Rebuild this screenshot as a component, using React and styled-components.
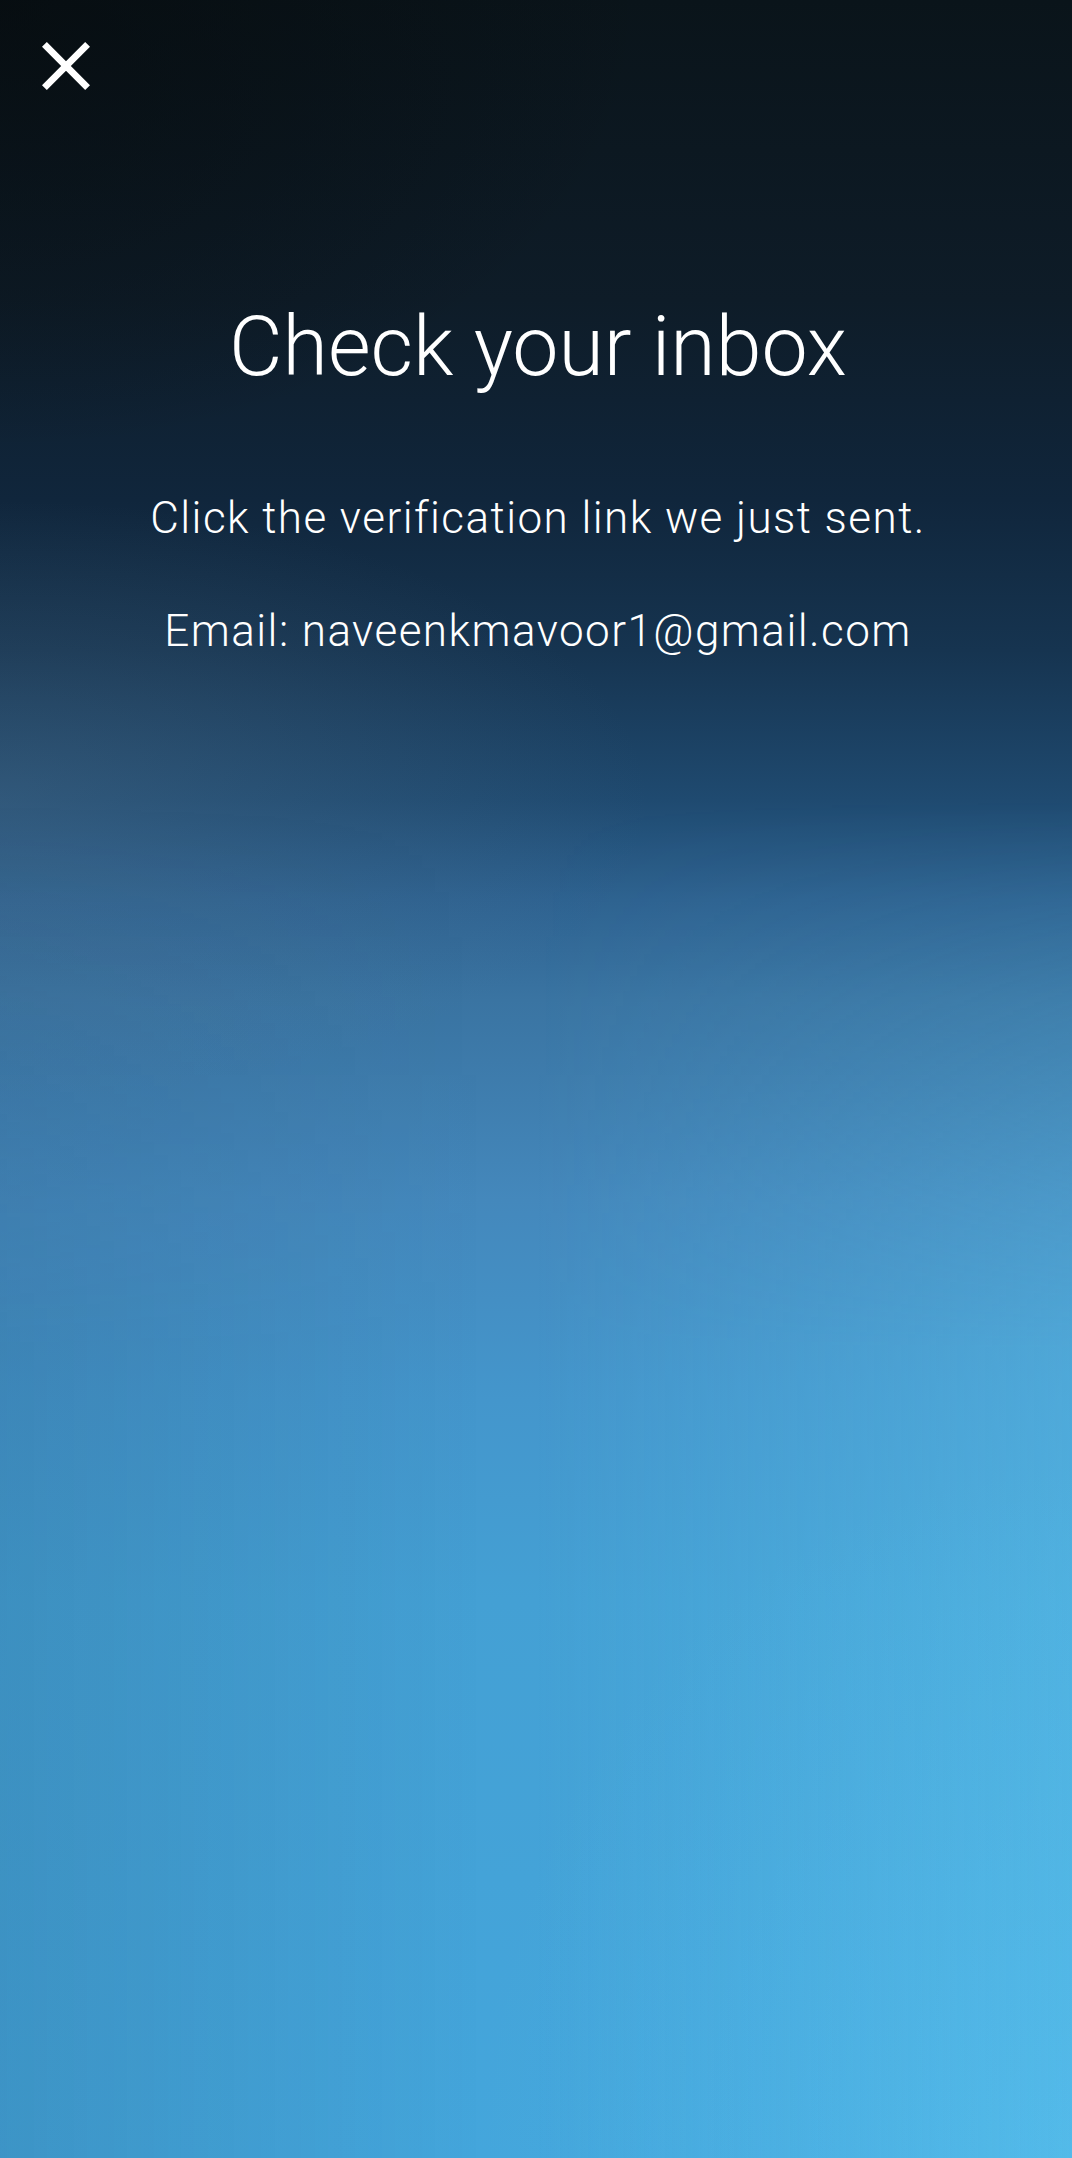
import React from "react";
import styled, { createGlobalStyle } from "styled-components";

const Global = createGlobalStyle`
  html, body {
    margin: 0;
    padding: 0;
  }
  body {
    font-family: Roboto, "Noto Sans", "Liberation Sans", sans-serif;
    -webkit-font-smoothing: antialiased;
  }
`;

const Screen = styled.div`
  position: relative;
  width: 100%;
  height: 100vh;
  min-height: 2158px;
  overflow: hidden;
  display: flex;
  flex-direction: column;
  color: #ffffff;
  background:
    radial-gradient(ellipse 650px 300px at 0% 800px, rgba(95, 125, 150, 0.28), rgba(95, 125, 150, 0) 100%),
    radial-gradient(ellipse 600px 700px at 100% 100%, rgba(100, 210, 255, 0.18), rgba(100, 210, 255, 0) 100%),
    linear-gradient(180deg,
      #0a141a 0px,
      #0e1c28 300px,
      #10263c 500px,
      #163450 650px,
      #1f4a70 800px,
      #2e6290 900px,
      #3a74a2 1000px,
      #4488bc 1200px,
      #4496cc 1400px,
      #44a0d4 1600px,
      #44a6dc 2158px);

  &::before {
    content: "";
    position: absolute;
    inset: 0;
    pointer-events: none;
    background: linear-gradient(90deg,
      rgba(20, 45, 70, 0.14) 0%,
      rgba(20, 45, 70, 0) 45%,
      rgba(105, 215, 250, 0) 50%,
      rgba(105, 215, 250, 0.3) 100%);
    -webkit-mask-image: linear-gradient(180deg, transparent 800px, #000 1350px);
    mask-image: linear-gradient(180deg, transparent 800px, #000 1350px);
  }
`;

const TopShade = styled.div`
  position: absolute;
  inset: 0;
  pointer-events: none;
  background: radial-gradient(ellipse 650px 450px at 0% 0%, rgba(4, 8, 10, 0.55), rgba(4, 8, 10, 0) 100%);
`;

const Layer = styled.div`
  position: relative;
  display: flex;
  flex-direction: column;
`;

const TopBar = styled.header`
  display: flex;
  align-items: center;
  padding: 42px 0 0 42px;
`;

const CloseButton = styled.button`
  width: 48px;
  height: 48px;
  padding: 0;
  margin: 0;
  border: 0;
  background: transparent;
  color: #ffffff;
  display: flex;
  align-items: center;
  justify-content: center;
  cursor: pointer;

  svg {
    width: 48px;
    height: 48px;
    display: block;
  }
`;

const Content = styled.main`
  display: flex;
  flex-direction: column;
  align-items: center;
  text-align: center;
  padding-top: 207px;
  padding-left: 4px;
`;

const Title = styled.h1`
  margin: 0;
  font-family: Roboto, "Noto Sans", sans-serif;
  font-weight: 300;
  font-size: 82.5px;
  line-height: 1.2;
  letter-spacing: 0;
  color: #ffffff;
`;

const Message = styled.p`
  margin: ${(p) => p.$top}px 0 0;
  font-family: Roboto, "Noto Sans", sans-serif;
  font-weight: 300;
  font-size: 44px;
  line-height: 1.2;
  letter-spacing: 1.45px;
  color: #ffffff;
`;

export default function App() {
  return (
    <>
      <Global />
      <Screen>
        <TopShade />
        <Layer>
          <TopBar>
            <CloseButton aria-label="Close">
              <svg viewBox="5 5 14 14" fill="currentColor">
                <path d="M19 6.41L17.59 5 12 10.59 6.41 5 5 6.41 10.59 12 5 17.59 6.41 19 12 13.41 17.59 19 19 17.59 13.41 12z" />
              </svg>
            </CloseButton>
          </TopBar>
          <Content>
            <Title>Check your inbox</Title>
            <Message $top={96}>Click the verification link we just sent.</Message>
            <Message $top={60}>Email: naveenkmavoor1@gmail.com</Message>
          </Content>
        </Layer>
      </Screen>
    </>
  );
}
